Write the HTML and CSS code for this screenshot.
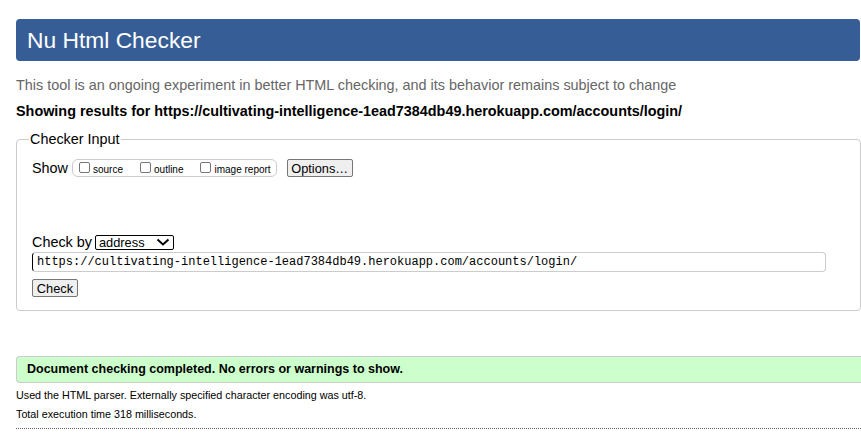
FILE: index.html
```html
<!DOCTYPE html>
<html>
<head>
<meta charset="utf-8">
<link rel="stylesheet" href="styles.css">
</head>
<body>
<h1 class="title">Nu Html Checker</h1>
<p class="intro">This tool is an ongoing experiment in better HTML checking, and its behavior remains subject to change</p>
<p class="showing">Showing results for https://cultivating-intelligence-1ead7384db49.herokuapp.com/accounts/login/</p>
<fieldset class="panel">
  <legend class="legend">Checker Input</legend>
  <div class="show-row">
    <span class="show-label">Show</span>
    <span class="opts">
      <label class="opt"><span class="box"></span>source</label>
      <label class="opt"><span class="box"></span>outline</label>
      <label class="opt"><span class="box"></span>image report</label>
    </span>
    <span class="btn btn-options">Options…</span>
  </div>
  <div class="checkby-row">
    <span class="checkby-label">Check by</span>
    <span class="select">address<svg class="chev" width="14" height="10" viewBox="0 0 14 10"><path d="M1.5 2.5 L7 7.5 L12.5 2.5" fill="none" stroke="#000" stroke-width="2"/></svg></span>
  </div>
  <div class="url">https://cultivating-intelligence-1ead7384db49.herokuapp.com/accounts/login/</div>
  <div class="check-row"><span class="btn btn-check">Check</span></div>
</fieldset>
<p class="success">Document checking completed. No errors or warnings to show.</p>
<p class="meta">Used the HTML parser. Externally specified character encoding was utf-8.</p>
<p class="meta">Total execution time 318 milliseconds.</p>
<hr class="dots">
</body>
</html>
```
FILE: styles.css
```css
html, body { margin: 0; padding: 0; }
body {
  font-family: "Liberation Sans", Arial, sans-serif;
  font-size: 14.4px;
  color: #000;
  background: #fff;
  padding: 19px 0 0 16px;
  overflow: hidden;
  width: 845px;
}
.title {
  margin: 0;
  width: 844px;
  box-sizing: border-box;
  background: #365d95;
  color: #fff;
  font-weight: normal;
  font-size: 22.8px;
  line-height: 42px;
  height: 42px;
  padding: 0 11px;
  border-radius: 4px;
}
.intro {
  margin: 16px 0 0;
  color: #666;
  line-height: 17px;
}
.showing {
  margin: 9px 0 0;
  font-weight: bold;
  line-height: 17px;
}
.panel {
  margin: 11px 0 0;
  border: 1px solid #ccc;
  border-radius: 4px;
  padding: 0 15px 13px;
  width: 845px;
  box-sizing: border-box;
  display: flex;
  flex-direction: column;
}
.legend {
  padding: 0 1px;
  margin-left: -3px;
  line-height: 17px;
}
.show-row {
  margin-top: 10px;
  display: flex;
  align-items: center;
  height: 20px;
}
.show-label { margin-right: 4px; }
.opts {
  display: flex;
  align-items: center;
  border: 1px solid #ccc;
  border-radius: 6px;
  height: 18px;
  box-sizing: border-box;
  padding: 0 5px 0 6px;
  font-size: 10px;
}
.opt { display: flex; align-items: center; margin-right: 17px; line-height: 12px; padding-top: 3px; }
.opt:last-child { margin-right: 0; }
.box {
  width: 11px; height: 11px;
  border: 1px solid #767676;
  border-radius: 2px;
  box-sizing: border-box;
  margin-right: 3px;
  margin-top: -4px;
}
.btn {
  display: inline-flex;
  align-items: center;
  justify-content: center;
  border: 1px solid #767676;
  background: #efefef;
  font-size: 12.8px;
  height: 18px;
  box-sizing: border-box;
  border-radius: 2px;
}
.btn-options { margin-left: 10px; width: 66px; }
.btn-check { width: 46px; }
.checkby-row {
  margin-top: 57px;
  display: flex;
  align-items: center;
  height: 14px;
}
.checkby-label { margin-right: 3px; }
.select {
  display: inline-flex;
  align-items: center;
  justify-content: space-between;
  width: 79px;
  height: 15px;
  box-sizing: border-box;
  border: 1px solid #000;
  border-radius: 2px;
  font-size: 12.8px;
  padding: 0 3px 0 3px;
}
.url {
  margin-top: 3px;
  width: 794px;
  height: 20px;
  box-sizing: border-box;
  border: 1px solid #ccc;
  border-left: 1px solid #000;
  border-radius: 4px;
  font-family: "Liberation Mono", "Courier New", monospace;
  font-size: 12px;
  line-height: 18px;
  padding-left: 4px;
}
.check-row { margin-top: 7px; display: flex; }
.success {
  margin: 45px 0 0;
  background: #cfc;
  border: 1px solid #ccc;
  border-right: none;
  border-radius: 4px 0 0 4px;
  font-weight: bold;
  font-size: 12.5px;
  line-height: 25px;
  padding: 0 0 0 10px;
}
.meta {
  margin: 6px 0 0;
  font-size: 10.75px;
  line-height: 13px;
}
.meta + .meta { margin-top: 6px; }
.dots {
  margin: 7px 0 0;
  border: none;
  border-top: 1px dotted #666;
  height: 0;
}
```
